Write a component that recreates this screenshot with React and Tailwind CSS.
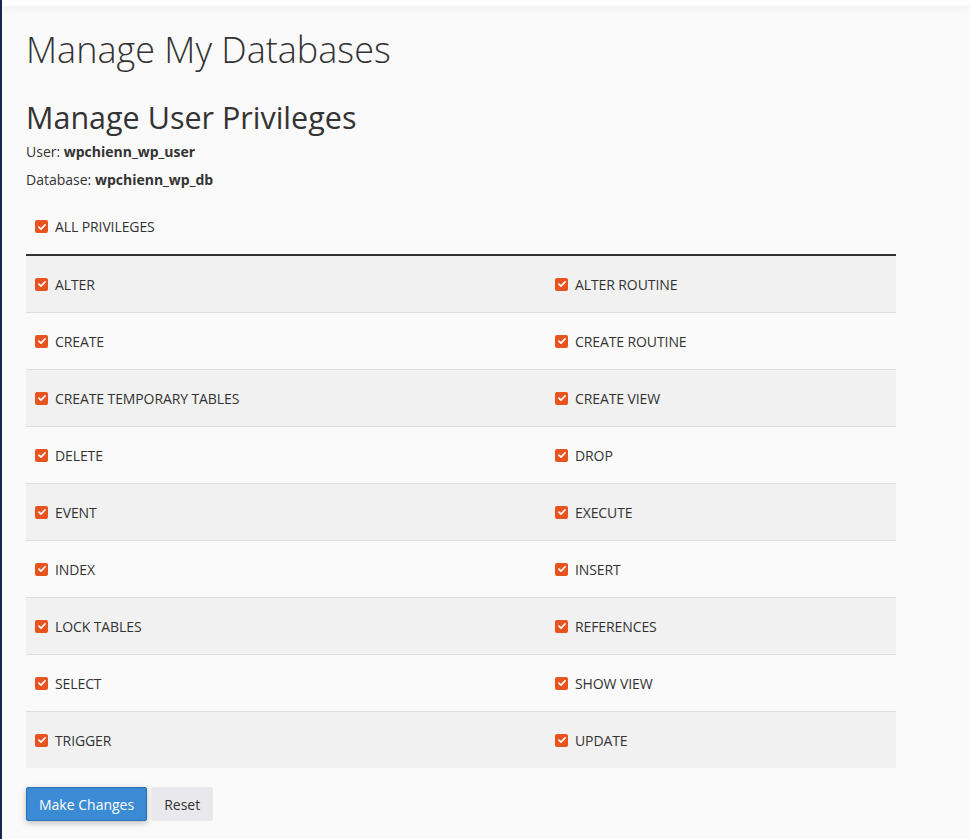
import React from "react";

const rows = [
  ["ALTER", "ALTER ROUTINE"],
  ["CREATE", "CREATE ROUTINE"],
  ["CREATE TEMPORARY TABLES", "CREATE VIEW"],
  ["DELETE", "DROP"],
  ["EVENT", "EXECUTE"],
  ["INDEX", "INSERT"],
  ["LOCK TABLES", "REFERENCES"],
  ["SELECT", "SHOW VIEW"],
  ["TRIGGER", "UPDATE"],
];

function Check({ label }) {
  return (
    <label className="flex items-center gap-[7px] text-[14px] tracking-[-0.1px] text-[#333]">
      <span className="flex h-[13px] w-[13px] items-center justify-center rounded-[2px] bg-[#e8531f]">
        <svg viewBox="0 0 12 12" className="h-[10px] w-[10px]">
          <path d="M2.3 6.2 L4.8 8.6 L9.7 3.4" fill="none" stroke="#fff" strokeWidth="2" strokeLinecap="round" strokeLinejoin="round" />
        </svg>
      </span>
      <span>{label}</span>
    </label>
  );
}

export default function App() {
  return (
    <div className="min-h-[839px] bg-[#fafafa] font-['Open_Sans',sans-serif] text-[#333]">
      <div className="flex min-h-[839px]">
        <div className="w-[2px] shrink-0 bg-[#1b2553]" />
        <div className="flex-1">
          <div className="h-[6px] bg-white shadow-[0_2px_8px_rgba(0,0,0,0.06)]" />
          <div className="pl-[24px] pt-[24px]">
            <h1 className="text-[36px] font-light leading-[40px] text-[#333]">Manage My Databases</h1>
            <h2 className="mt-[30px] text-[30.5px] font-normal leading-[34px] text-[#333]">Manage User Privileges</h2>
            <div className="mt-[8px] text-[14px] leading-[20px]">
              User: <b className="font-bold">wpchienn_wp_user</b>
            </div>
            <div className="mt-[8px] text-[14px] leading-[20px]">
              Database: <b className="font-bold">wpchienn_wp_db</b>
            </div>
            <div className="mt-[26px] pl-[9px]">
              <Check label="ALL PRIVILEGES" />
            </div>
            <div className="mt-[17px] w-[870px] border-t-2 border-[#333]">
              {rows.map((r, i) => (
                <div
                  key={i}
                  className={`flex items-center ${i < rows.length - 1 ? "h-[57px] border-b border-[#dddddd]" : "h-[56px]"} ${i % 2 === 0 ? "bg-[#f1f1f1]" : "bg-[#fafafa]"}`}
                >
                  <div className="w-[60%] pl-[9px]">
                    <Check label={r[0]} />
                  </div>
                  <div className="w-[40%] pl-[7px]">
                    <Check label={r[1]} />
                  </div>
                </div>
              ))}
            </div>
            <div className="mt-[19px] flex gap-[4px]">
              <button className="h-[34px] rounded-[2px] border border-[#2a72b5] bg-[#3a8bd4] px-[12px] text-[14px] text-white shadow-[0_2px_6px_rgba(0,0,0,0.25)]">
                Make Changes
              </button>
              <button className="h-[34px] rounded-[2px] bg-[#e9e9ed] px-[13px] text-[14px] text-[#333]">
                Reset
              </button>
            </div>
          </div>
        </div>
      </div>
    </div>
  );
}
